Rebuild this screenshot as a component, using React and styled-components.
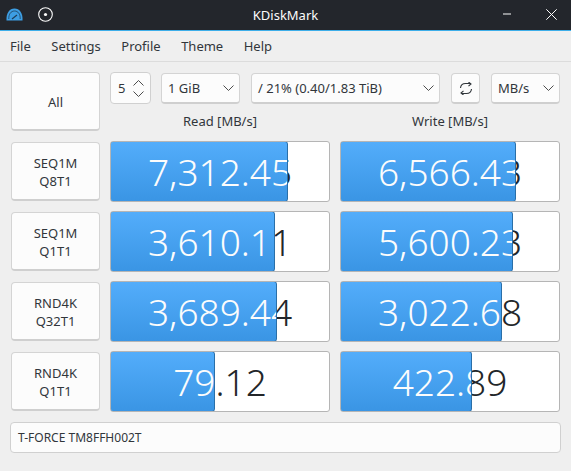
import React from "react";
import styled, { createGlobalStyle } from "styled-components";

const Global = createGlobalStyle`
  html, body { margin: 0; padding: 0; background: #efefef; }
  body { font-family: "Noto Sans", sans-serif; font-size: 13px; color: #31363b; }
`;
const Win = styled.div`
  width: 571px; height: 471px; display: flex; flex-direction: column; background: #efefef; overflow: hidden;
`;
const TitleBar = styled.div`
  height: 28px; flex: none; background: #23262c; border-bottom: 1px solid #3daee9;
  display: flex; align-items: center; padding: 0 0 2px 6px; position: relative; color: #fcfcfc;
`;
const Title = styled.div`
  position: absolute; left: 0; right: 0; top: 6px; text-align: center; font-size: 13px; line-height: 18px;
`;
const TitleIcons = styled.div`display: flex; align-items: center; gap: 15px;`;
const WinButtons = styled.div`margin-left: auto; margin-right: 14px; display: flex; align-items: center; gap: 35px;`;
const MenuBar = styled.div`
  height: 30px; flex: none; border-bottom: 1px solid #dcdcdc; display: flex; align-items: center; padding-left: 10px; gap: 20.5px;
`;
const MenuItem = styled.span`font-size: 13px; line-height: 18px; color: #31363b;`;
const Body = styled.div`
  padding: 10px 11px 0 11px; display: grid; grid-template-columns: 89px 220px 220px; column-gap: 10px; row-gap: 9px;
  grid-template-rows: 60px 61px 61px 61px 61px;
`;
const Btn = styled.div`
  background: #fcfcfc; border: 1px solid #d4d4d4; border-bottom: 2px solid #cfcfcf; border-radius: 4px; box-sizing: border-box;
  display: flex; align-items: center; justify-content: center; text-align: center; font-size: 13px; line-height: 18px; color: #31363b;
`;
const TestBtn = styled(Btn)`height: 59px; padding-top: 2px; margin-top: ${p => (p.$offset ? 1 : 0)}px;`;
const TopArea = styled.div`
  grid-column: 2 / 4; display: flex; flex-direction: column;
`;
const Controls = styled.div`display: flex; align-items: flex-start; height: 33px; gap: 11px;`;
const Spin = styled.div`
  width: 41px; height: 32px; box-sizing: border-box; background: #fcfcfc; border: 1px solid #d0d0d0; border-radius: 4px;
  display: flex; align-items: center; justify-content: space-between; padding: 0 6px 0 7px; margin-right: -1px;
`;
const Arrows = styled.div`display: flex; flex-direction: column; gap: 5px;`;
const Combo = styled(Btn)`
  width: ${p => p.$w}px; height: 31px; margin-top: 1px; justify-content: space-between; padding: 0 5px 0 6px;
`;
const IconBtn = styled(Btn)`width: 29px; height: 31px; margin-top: 1px;`;
const Heads = styled.div`display: grid; grid-template-columns: 220px 220px; column-gap: 10px; margin-top: 7px;`;
const Head = styled.div`text-align: center; font-size: 13px; line-height: 18px; color: #31363b;`;
const Bar = styled.div`
  position: relative; height: 61px; background: #fff; border: 1px solid #b5b5b5; border-radius: 3px; box-sizing: border-box; overflow: hidden;
`;
const Value = styled.div`
  width: 218px; height: 59px; display: flex; align-items: center; justify-content: center; flex: none;
  font-size: 37px; font-weight: 300; line-height: 59px; color: ${p => (p.$light ? "#fcfcfc" : "#232629")};
`;
const Fill = styled.div`
  position: absolute; left: -1px; top: -1px; height: 61px; box-sizing: border-box; overflow: hidden;
  background: linear-gradient(#53adfb, #3a95e4); border: 1px solid #2a6fa8; border-radius: 3px;
`;
const Device = styled.div`
  margin: 10px 10px 0 10px; height: 31px; box-sizing: border-box; background: #fcfcfc; border: 1px solid #d0d0d0; border-radius: 4px;
  display: flex; align-items: center; padding-left: 7px; font-size: 12px; line-height: 18px; color: #31363b;
`;

const Chevron = () => (
  <svg width="11" height="6" viewBox="0 0 11 6" fill="none" stroke="#4d4d4d" strokeWidth="1"><path d="M0.5 0.5 L5.5 5.5 L10.5 0.5" /></svg>
);
const Up = () => (
  <svg width="11" height="6" viewBox="0 0 11 6" fill="none" stroke="#4d4d4d" strokeWidth="1"><path d="M0.5 5.5 L5.5 0.5 L10.5 5.5" /></svg>
);
const Down = () => (
  <svg width="11" height="6" viewBox="0 0 11 6" fill="none" stroke="#4d4d4d" strokeWidth="1"><path d="M0.5 0.5 L5.5 5.5 L10.5 0.5" /></svg>
);
const Refresh = () => (
  <svg width="14" height="13" viewBox="0 0 14 13" fill="none" stroke="#31363b" strokeWidth="1.1">
    <path d="M1.5 6 C1.8 3 3.8 1.5 6.5 1.5 H11.5" /><path d="M9.5 0 L12 2 L9.5 4.2" />
    <path d="M12.5 7 C12.2 10 10.2 11.5 7.5 11.5 H2.5" /><path d="M4.5 13 L2 11 L4.5 8.8" />
  </svg>
);
const Gauge = () => (
  <svg width="17" height="13" viewBox="0 0 17 13">
    <path d="M0.5 12.5 C0 5 3.5 0.5 8.5 0.5 C13.5 0.5 17 5 16.5 12.5 Z" fill="#3d9ee3" />
    <path d="M2.8 11 C2.6 6 5 3 8.5 3 C12 3 14.4 6 14.2 11" fill="none" stroke="#1d3d58" strokeWidth="0.8" />
    <path d="M6 11 L11 7" stroke="#1d3d58" strokeWidth="1.2" />
  </svg>
);
const Pin = () => (
  <svg width="15" height="15" viewBox="0 0 15 15" fill="none">
    <circle cx="7.5" cy="7.5" r="6.8" stroke="#fcfcfc" strokeWidth="1.1" /><circle cx="7.5" cy="7.5" r="1.6" fill="#fcfcfc" />
  </svg>
);
const Minimize = () => (
  <svg width="8" height="2" viewBox="0 0 8 2"><path d="M0 1 H8" stroke="#fcfcfc" strokeWidth="1" /></svg>
);
const Close = () => (
  <svg width="11" height="11" viewBox="0 0 11 11"><path d="M0.3 0.3 L10.7 10.7 M10.7 0.3 L0.3 10.7" stroke="#fcfcfc" strokeWidth="1" /></svg>
);

const ResultBar = ({ value, width }) => (
  <Bar>
    <Value>{value}</Value>
    <Fill style={{ width }}><Value $light>{value}</Value></Fill>
  </Bar>
);

const rows = [
  { l: ["SEQ1M", "Q8T1"], r: "7,312.45", rw: 178, w: "6,566.43", ww: 176 },
  { l: ["SEQ1M", "Q1T1"], r: "3,610.11", rw: 165, w: "5,600.23", ww: 173 },
  { l: ["RND4K", "Q32T1"], r: "3,689.44", rw: 167, w: "3,022.68", ww: 162 },
  { l: ["RND4K", "Q1T1"], r: "79.12", rw: 105, w: "422.89", ww: 132 },
];

export default function App() {
  return (
    <Win>
      <Global />
      <TitleBar>
        <TitleIcons><Gauge /><Pin /></TitleIcons>
        <Title>KDiskMark</Title>
        <WinButtons><Minimize /><Close /></WinButtons>
      </TitleBar>
      <MenuBar>
        {["File", "Settings", "Profile", "Theme", "Help"].map(m => <MenuItem key={m}>{m}</MenuItem>)}
      </MenuBar>
      <Body>
        <TestBtn>All</TestBtn>
        <TopArea>
          <Controls>
            <Spin><span>5</span><Arrows><Up /><Down /></Arrows></Spin>
            <Combo $w={79}><span>1 GiB</span><Chevron /></Combo>
            <Combo $w={189}><span>/ 21% (0.40/1.83 TiB)</span><Chevron /></Combo>
            <IconBtn><Refresh /></IconBtn>
            <Combo $w={69}><span>MB/s</span><Chevron /></Combo>
          </Controls>
          <Heads><Head>Read [MB/s]</Head><Head>Write [MB/s]</Head></Heads>
        </TopArea>
        {rows.map(r => (
          <React.Fragment key={r.r}>
            <TestBtn $offset>{r.l[0]}<br />{r.l[1]}</TestBtn>
            <ResultBar value={r.r} width={r.rw} />
            <ResultBar value={r.w} width={r.ww} />
          </React.Fragment>
        ))}
      </Body>
      <Device>T-FORCE TM8FFH002T</Device>
    </Win>
  );
}
